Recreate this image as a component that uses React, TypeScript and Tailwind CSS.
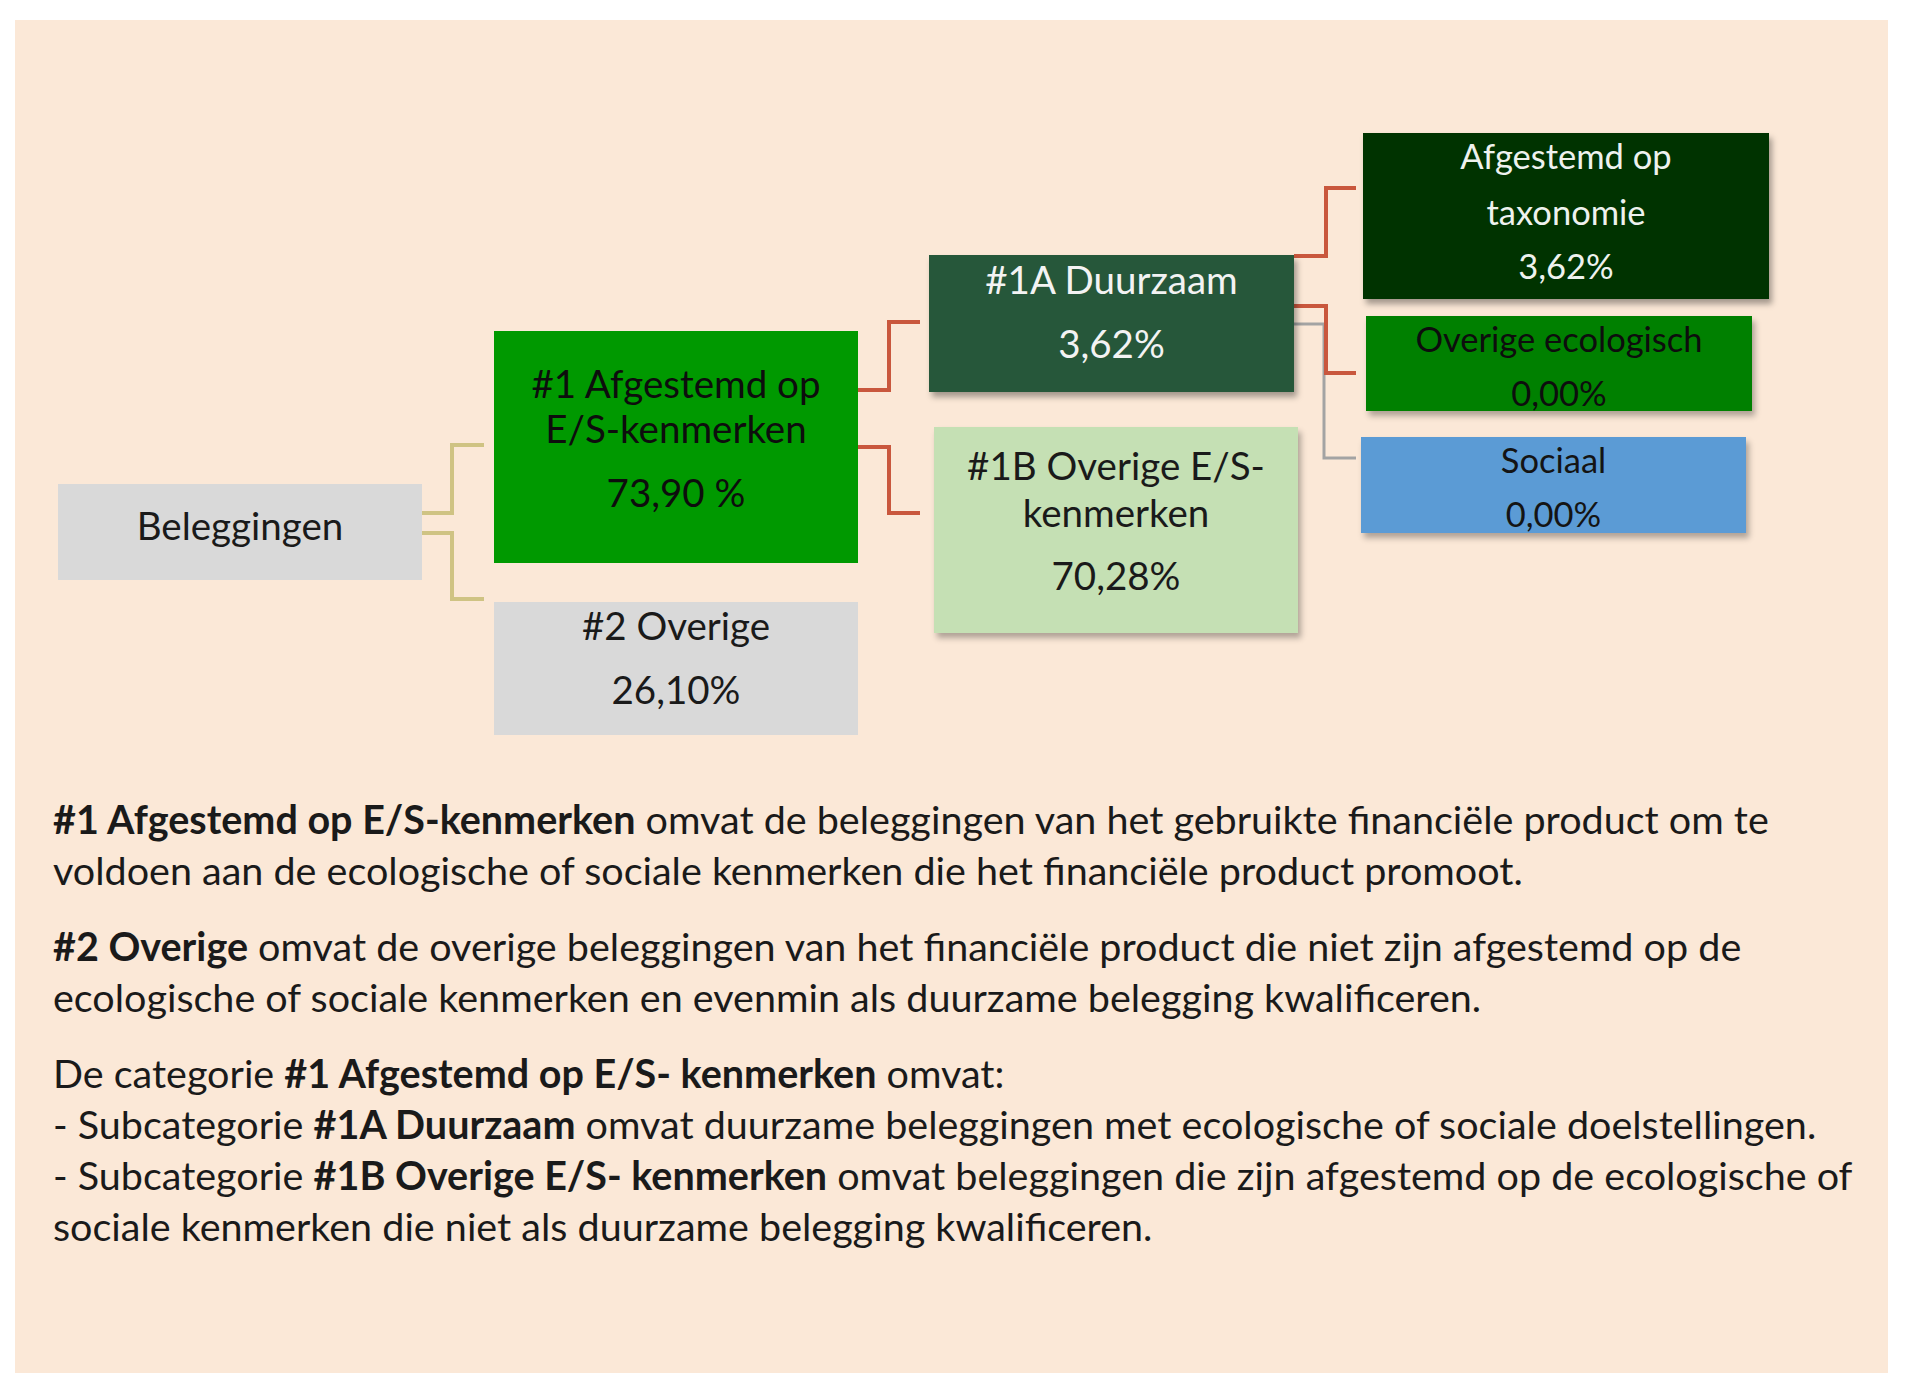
const font = { fontFamily: "Lato, 'Noto Sans', sans-serif" };

function Connectors() {
  return (
    <svg
      className="absolute left-0 top-0"
      width="1873"
      height="773"
      viewBox="0 0 1873 773"
      fill="none"
    >
      <g stroke="#cfc383" strokeWidth="4">
        <path d="M407 493 H437 V425 H469" />
        <path d="M407 513 H437 V579 H469" />
      </g>
      <path d="M1279 304 H1309 V438 H1341" stroke="#a3a3a3" strokeWidth="3" />
      <g stroke="#c9573d" strokeWidth="4">
        <path d="M843 370 H874 V302 H905" />
        <path d="M843 427 H874 V493 H905" />
        <path d="M1279 236 H1311 V168 H1341" />
        <path d="M1279 286 H1311 V353 H1341" />
      </g>
    </svg>
  );
}

function Diagram() {
  return (
    <div className="relative h-[773px] text-[38.5px] leading-[45px] text-center">
      <Connectors />

      <div className="absolute left-[43px] top-[464px] h-[96px] w-[364px] bg-[#d9d9d9] pt-[19px] text-[#1a1a1a]">
        <div>Beleggingen</div>
      </div>

      <div className="absolute left-[479px] top-[311px] h-[232px] w-[364px] bg-[#009900] pt-[30px] text-[#0d0d0d]">
        <div>#1 Afgestemd op</div>
        <div>E/S-kenmerken</div>
        <div className="mt-[19px]">73,90 %</div>
      </div>

      <div className="absolute left-[479px] top-[582px] h-[133px] w-[364px] bg-[#d9d9d9] pt-[1px] text-[#1a1a1a]">
        <div>#2 Overige</div>
        <div className="mt-[19px]">26,10%</div>
      </div>

      <div className="absolute left-[914px] top-[235px] h-[137px] w-[365px] bg-[#26573a] pt-[2px] text-[#f3f3f3] shadow-[3px_5px_6px_rgba(0,0,0,0.35)]">
        <div>#1A Duurzaam</div>
        <div className="mt-[19px]">3,62%</div>
      </div>

      <div className="absolute left-[919px] top-[407px] h-[206px] w-[364px] bg-[#c5e0b4] pt-[15px] text-[#1a1a1a] leading-[47px] shadow-[3px_5px_6px_rgba(0,0,0,0.3)]">
        <div>#1B Overige E/S-</div>
        <div>kenmerken</div>
        <div className="mt-[16px]">70,28%</div>
      </div>

      <div className="absolute left-[1348px] top-[113px] h-[166px] w-[406px] bg-[#003300] text-[34.5px] text-[#eef2ee] shadow-[3px_5px_6px_rgba(0,0,0,0.35)]">
        <div>Afgestemd op</div>
        <div className="mt-[11px]">taxonomie</div>
        <div className="mt-[9px]">3,62%</div>
      </div>

      <div className="absolute left-[1351px] top-[296px] h-[95px] w-[386px] bg-[#008000] text-[34.5px] text-[#0d0d0d] shadow-[3px_5px_6px_rgba(0,0,0,0.3)]">
        <div>Overige ecologisch</div>
        <div className="mt-[9px]">0,00%</div>
      </div>

      <div className="absolute left-[1346px] top-[417px] h-[96px] w-[385px] bg-[#5b9bd5] text-[34.5px] text-[#141414] shadow-[3px_5px_6px_rgba(0,0,0,0.3)]">
        <div>Sociaal</div>
        <div className="mt-[9px]">0,00%</div>
      </div>
    </div>
  );
}

export default function App() {
  return (
    <div className="min-h-[1398px] bg-white pl-[15px] pt-[20px]" style={font}>
      <div className="h-[1353px] w-[1873px] bg-[#fbe8d7]">
        <Diagram />

        <div className="whitespace-nowrap pl-[38px] text-[39.5px] leading-[51px] text-[#1a1a1a]">
          <p>
            <b>#1 Afgestemd op E/S-kenmerken</b> omvat de beleggingen van het
            gebruikte financiële product om te
            <br />
            voldoen aan de ecologische of sociale kenmerken die het financiële
            product promoot.
          </p>
          <p className="mt-[25px]">
            <b>#2 Overige</b> omvat de overige beleggingen van het financiële
            product die niet zijn afgestemd op de
            <br />
            ecologische of sociale kenmerken en evenmin als duurzame belegging
            kwalificeren.
          </p>
          <p className="mt-[25px]">
            De categorie <b>#1 Afgestemd op E/S- kenmerken</b> omvat:
            <br />- Subcategorie <b>#1A Duurzaam</b> omvat duurzame beleggingen
            met ecologische of sociale doelstellingen.
            <br />- Subcategorie <b>#1B Overige E/S- kenmerken</b> omvat
            beleggingen die zijn afgestemd op de ecologische of
            <br />
            sociale kenmerken die niet als duurzame belegging kwalificeren.
          </p>
        </div>
      </div>
    </div>
  );
}
